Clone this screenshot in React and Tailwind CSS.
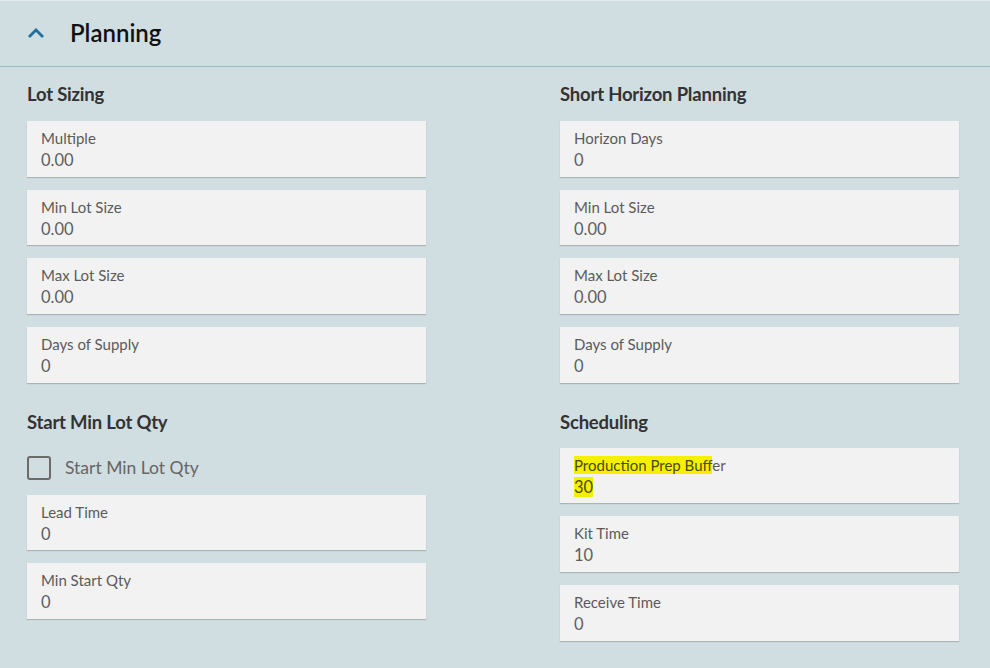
import React from "react";

const FONT = { fontFamily: "Lato, 'Open Sans', 'Liberation Sans', sans-serif" };

function Field({ label, value, highlight }) {
  return (
    <div className="bg-[#f2f2f2] h-[55.7px] pl-[14px] pt-[7px] shadow-[0_1px_1px_rgba(0,0,0,0.18)]">
      {highlight ? (
        <div className="text-[15px] leading-[21px] text-[#5b5b5b]">
          <span className="bg-[#f5f000] text-[#4a4a00]">Production Prep Buff</span>er
        </div>
      ) : (
        <div className="text-[15px] leading-[21px] text-[#5b5b5b]">{label}</div>
      )}
      <div className="text-[16.5px] leading-[23px] text-[#5e5e5e]">
        {highlight ? <span className="bg-[#f5f000] text-[#4a4a00]">{value}</span> : value}
      </div>
    </div>
  );
}

function Heading({ children }) {
  return (
    <h3 className="text-[18.5px] leading-[24px] font-bold text-[#333] tracking-[-0.2px]">
      {children}
    </h3>
  );
}

export default function App() {
  return (
    <div className="w-[990px] h-[668px] bg-[#d0dde1] overflow-hidden" style={FONT}>
      {/* Header */}
      <div className="h-[67px] border-t border-[#e2eaec] border-b border-b-[#8fbdcb] flex items-center">
        <svg width="18" height="12" viewBox="0 0 18 12" className="ml-[27px] mt-[-1px]">
          <polyline points="2,10 9,3 16,10" fill="none" stroke="#1f6f9a" strokeWidth="2.8" />
        </svg>
        <span className="ml-[25px] text-[24px] font-semibold text-[#111] mt-[-2px]">Planning</span>
      </div>

      {/* Body */}
      <div className="grid grid-cols-[399px_399px] gap-x-[134px] pl-[27px] pt-[15px]">
        {/* Left column */}
        <div className="flex flex-col">
          <Heading>Lot Sizing</Heading>
          <div className="mt-[15px] flex flex-col gap-[13px]">
            <Field label="Multiple" value="0.00" />
            <Field label="Min Lot Size" value="0.00" />
            <Field label="Max Lot Size" value="0.00" />
            <Field label="Days of Supply" value="0" />
          </div>
          <div className="mt-[27px]">
            <Heading>Start Min Lot Qty</Heading>
          </div>
          <label className="mt-[23px] flex items-center h-[23px]">
            <span className="w-[24px] h-[24px] border-2 border-[#6b6b6b] rounded-[3px]" />
            <span className="ml-[14px] text-[17.5px] text-[#666]">Start Min Lot Qty</span>
          </label>
          <div className="mt-[15px] flex flex-col gap-[13px]">
            <Field label="Lead Time" value="0" />
            <Field label="Min Start Qty" value="0" />
          </div>
        </div>

        {/* Right column */}
        <div className="flex flex-col">
          <Heading>Short Horizon Planning</Heading>
          <div className="mt-[15px] flex flex-col gap-[13px]">
            <Field label="Horizon Days" value="0" />
            <Field label="Min Lot Size" value="0.00" />
            <Field label="Max Lot Size" value="0.00" />
            <Field label="Days of Supply" value="0" />
          </div>
          <div className="mt-[27px]">
            <Heading>Scheduling</Heading>
          </div>
          <div className="mt-[14px] flex flex-col gap-[13px]">
            <Field highlight value="30" />
            <Field label="Kit Time" value="10" />
            <Field label="Receive Time" value="0" />
          </div>
        </div>
      </div>
    </div>
  );
}
